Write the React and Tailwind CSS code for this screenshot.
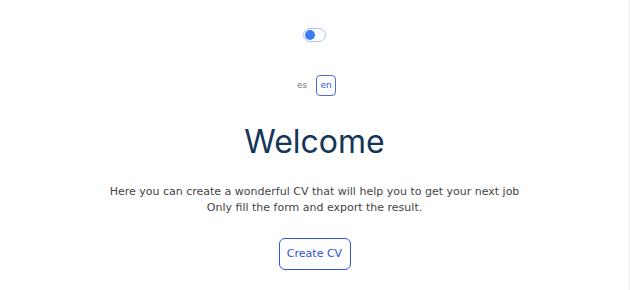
import React, { useState } from 'react';

export default function App() {
  const [dark, setDark] = useState(false);
  const [lang, setLang] = useState('en');

  return (
    <div
      className="min-h-screen bg-white flex flex-col items-center border-r border-[#f0f0f0]"
      style={{ fontFamily: '"DejaVu Sans", sans-serif' }}
    >
      <button
        onClick={() => setDark(!dark)}
        aria-label="Toggle theme"
        className="mt-[28px] w-[23px] h-[14px] rounded-full border border-[#a9c4f5] bg-white flex items-center px-[1px]"
      >
        <span className="w-[10px] h-[10px] rounded-full bg-[#3b7cf4]" />
      </button>

      <div className="mt-[33px] flex items-center gap-[5px]">
        <button
          onClick={() => setLang('es')}
          className={`h-[21px] px-[3px] rounded-[4px] text-[9px] ${lang === 'es' ? 'border border-[#4f6fe0] text-[#3556d9]' : 'border border-transparent text-[#777]'}`}
        >
          es
        </button>
        <button
          onClick={() => setLang('en')}
          className={`h-[21px] w-[20px] rounded-[4px] text-[9px] ${lang === 'en' ? 'border border-[#4f6fe0] text-[#3556d9]' : 'border border-transparent text-[#777]'}`}
        >
          en
        </button>
      </div>

      <h1
        className="mt-[26px] text-[32px] leading-[40px] text-[#16355a] font-normal"
        style={{ fontFamily: '"Inter", sans-serif' }}
      >
        Welcome
      </h1>

      <div className="mt-[22px] text-center text-[11px] leading-[16px] text-[#444]">
        <p>Here you can create a wonderful CV that will help you to get your next job</p>
        <p>Only fill the form and export the result.</p>
      </div>

      <button className="mt-[22px] w-[72px] h-[32px] rounded-[6px] border border-[#2f55e0] text-[11px] text-[#2f4fd6]">
        Create CV
      </button>
    </div>
  );
}
